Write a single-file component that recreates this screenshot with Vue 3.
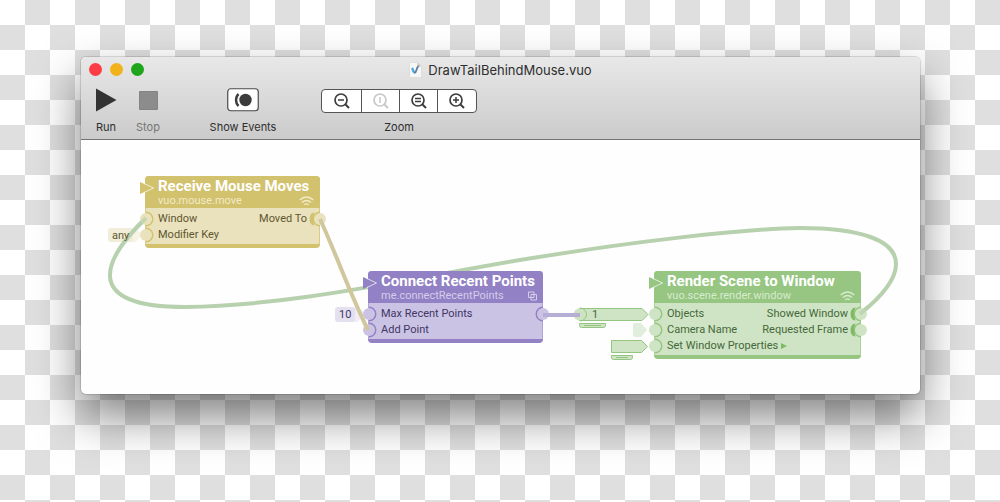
<script setup>
const zooms = [
  { id: 'out', label: 'Zoom out', d: 'M6 8h6' },
  { id: 'actual', label: 'Actual size', d: 'M9 5v6', off: true },
  { id: 'fit', label: 'Zoom to fit', d: 'M6 6.5h6M6 9.5h6' },
  { id: 'in', label: 'Zoom in', d: 'M6 8h6M9 5v6' }
]

const nodes = [
  {
    id: 'mouse', title: 'Receive Mouse Moves', kind: 'vuo.mouse.move', icon: 'wifi',
    rows: [
      { left: 'Window', right: 'Moved To', event: true },
      { left: 'Modifier Key' }
    ]
  },
  {
    id: 'connect', title: 'Connect Recent Points', kind: 'me.connectRecentPoints', icon: 'copy',
    rows: [
      { left: 'Max Recent Points', right: ' ' },
      { left: 'Add Point' }
    ]
  },
  {
    id: 'render', title: 'Render Scene to Window', kind: 'vuo.scene.render.window', icon: 'wifi',
    rows: [
      { left: 'Objects', right: 'Showed Window', event: true },
      { left: 'Camera Name', right: 'Requested Frame', event: true },
      { left: 'Set Window Properties', more: true }
    ]
  }
]
</script>

<template>
  <div class="desktop">
    <main class="window">
      <header class="chrome">
        <div class="titlebar">
          <div class="lights">
            <button class="light close" aria-label="Close"></button>
            <button class="light minimize" aria-label="Minimize"></button>
            <button class="light full" aria-label="Full screen"></button>
          </div>
          <h1 class="title">
            <svg width="13" height="16" viewBox="0 0 13 16" aria-hidden="true">
              <path d="M.5.5h8l4 4v11H.5z" fill="#f7f7f7" stroke="#dedede" />
              <path d="M8.500 .5v4h4z" fill="#c4c4c4" />
              <path d="M3 6c1 1 .8 4.500 3 4.500" stroke="#4aa3dc" stroke-width="2.400" fill="none" />
              <path d="M5.500 10.800C8 10.500 7 6 9.500 4" stroke="#5f7d96" stroke-width="1.800" fill="none" />
            </svg>
            DrawTailBehindMouse.vuo
          </h1>
        </div>
        <div class="toolbar">
          <button class="tool">
            <svg class="glyph" width="22" height="24" viewBox="0 0 22 24" aria-hidden="true"><path d="M1 .5L21.500 12 1 23.500z" fill="#333" /></svg>
            Run
          </button>
          <button class="tool stop" disabled>
            <svg class="glyph" width="22" height="24" viewBox="0 0 22 24" aria-hidden="true"><path d="M2.500 3.500h18v18h-18z" fill="#8c8c8c" stroke="#848484" /></svg>
            Stop
          </button>
          <button class="tool events">
            <svg class="glyph" width="32" height="24" viewBox="0 0 32 24" aria-hidden="true">
              <rect x=".75" y=".75" width="30.500" height="22" rx="3" fill="#fff" stroke="#4a4a4a" stroke-width="1.200" />
              <circle cx="18.500" cy="12" r="6.200" fill="#3c3c3c" />
              <path d="M11.500 6C8.200 9 8.200 15 11.500 18" fill="none" stroke="#3c3c3c" stroke-width="2.500" />
            </svg>
            Show Events
          </button>
          <div class="zoom" role="group" aria-labelledby="zoom-label">
            <div class="segments">
              <button v-for="z in zooms" :key="z.id" class="segment" :aria-label="z.label" :disabled="z.off">
                <svg width="18" height="18" viewBox="0 0 18 18" fill="none" stroke="currentColor" aria-hidden="true">
                  <circle cx="8" cy="8" r="6" stroke-width="1.700" />
                  <path d="M12 12l4 4" stroke-width="2" />
                  <path :d="z.d" transform="translate(-1 0)" stroke-width="1.500" />
                </svg>
              </button>
            </div>
            <span id="zoom-label">Zoom</span>
          </div>
        </div>
      </header>

      <section class="canvas" aria-label="Composition">
        <svg class="layer" viewBox="81 140 839 254" width="839" height="254">
          <path d="M130 228h5l8 7-8 7h-5z" fill="#f7f4e6" />
          <rect x="108" y="228" width="25" height="14" rx="3" fill="#f1edd9" />
          <path d="M352 307h5l9 7-9 8h-5z" fill="#f0edf7" />
          <rect x="335" y="307" width="20" height="15" rx="3" fill="#e4e0f0" />
          <path d="M146 218C120 243 109 262 110 277C112 300 145 307 185 307C300 305 400 280 520 260C630 242 740 229 800 228C860 228 896 240 896 264C896 280 880 298 860 314" class="cable green" />
          <text x="112" y="239" class="value olive">any</text>
          <text x="339" y="318" class="value violet">10</text>
          <g class="drawer">
            <path d="M579 308.500h63l6 6-6 6h-63z" />
            <path d="M579.500 323.500h26v2q0 2-2 2h-22q-2 0-2-2z" />
            <path d="M584 325.500h17" />
            <path d="M611.500 340.500h30l6 6-6 6h-30z" />
            <path d="M611.500 355.500h21v2q0 2-2 2h-17q-2 0-2-2z" />
            <path d="M616 357.500h12" />
          </g>
          <path d="M635 323h6l6 7-6 7h-6q-2 0-2-2v-10q0-2 2-2z" fill="#e2eedd" />
          <circle cx="579.500" cy="314.500" r="6" fill="#cde3c1" />
          <path d="M580 308a6.500 6.500 0 0 1 0 13" class="ring" />
          <text x="592" y="318" class="value leaf">1</text>
        </svg>

        <article v-for="n in nodes" :key="n.id" class="node" :class="n.id">
          <svg class="trigger" width="16" height="14" viewBox="0 0 16 14" aria-hidden="true">
            <path class="flag" d="M1 1L14 7 1 13z" />
            <path d="M5 2.500L14.500 7 5 11.500" fill="none" stroke="#fff" stroke-opacity=".7" />
          </svg>
          <header class="head">
            <h2>{{ n.title }}</h2>
            <p>
              {{ n.kind }}
              <svg v-if="n.icon === 'wifi'" width="15" height="10" viewBox="0 0 15 10" fill="none" stroke="currentColor" stroke-width="1.400" aria-hidden="true">
                <path d="M.7 4Q7.500-2 14.300 4M3 6.500Q7.500 2.500 12 6.500M5.300 8.800Q7.500 7 9.700 8.800" />
              </svg>
              <svg v-else width="9" height="10" viewBox="0 0 9 10" fill="none" stroke="currentColor" aria-hidden="true">
                <path d="M.5 1h5.500v5.500H.5zM3 3.500h5.500V9H3z" />
              </svg>
            </p>
          </header>
          <div class="body">
            <div v-for="r in n.rows" :key="r.left" class="row">
              <svg class="port in" width="18" height="16" viewBox="0 0 18 16" aria-hidden="true">
                <path d="M9 1.500a6.500 6.500 0 0 1 0 13" />
                <circle cx="9" cy="8" r="6" />
              </svg>
              <span>{{ r.left }}
                <svg v-if="r.more" class="more" width="6" height="6" viewBox="0 0 6 6" aria-hidden="true"><path d="M0 0l6 3-6 3z" /></svg>
              </span>
              <span v-if="r.right" class="out-label">{{ r.right }}</span>
              <svg v-if="r.right" class="port out" width="22" height="16" viewBox="0 0 22 16" aria-hidden="true">
                <path d="M13 1.500a6.500 6.500 0 0 0 0 13" />
                <circle cx="13" cy="8" r="6" />
                <path v-if="r.event" class="event" d="M7.500 1.500C1 1.500 1 14.500 7.500 14.500C5.500 10.500 5.500 5.500 7.500 1.500z" />
              </svg>
            </div>
          </div>
        </article>

        <svg class="layer" viewBox="81 140 839 254" width="839" height="254" aria-hidden="true">
          <path d="M146 218L136 228M860 314L869 306" class="cable green tip" />
          <path d="M320 219C337 256 350 294 368 330" class="cable yellow" />
          <path d="M543 315H580" class="cable purple" />
        </svg>
      </section>
    </main>
  </div>
</template>

<style>
body {
  margin: 0;
}
</style>

<style scoped>
.desktop {
  box-sizing: border-box;
  min-height: 100vh;
  padding: 57px 80px 80px 81px;
  background: repeating-conic-gradient(#dfdfdf 0 25%, #fff 0 50%) 0 0 / 50px 50px;
  font-family: Inter, Roboto, sans-serif;
  color: #2e2e2e;
}
.window {
  border-radius: 5px;
  background: #fefefe;
  box-shadow: 0 0 0 1px rgba(0, 0, 0, 0.12), 0 22px 46px rgba(0, 0, 0, 0.5);
}
.chrome {
  border-bottom: 1px solid #737373;
  border-radius: 5px 5px 0 0;
  background: linear-gradient(#e8e8e8, #cbcbcb);
}
.titlebar {
  display: grid;
  grid-template-columns: 1fr auto 1fr;
  align-items: center;
  height: 25px;
}
.lights {
  display: flex;
  gap: 8px;
  padding-left: 8px;
}
.light {
  width: 13px;
  height: 13px;
  padding: 0;
  border: 0;
  border-radius: 50%;
}
.close { background: #fc3d46; }
.minimize { background: #f2b21b; }
.full { background: #1ea51b; }
.title {
  display: flex;
  align-items: center;
  gap: 6px;
  margin: 0;
  font-size: 13px;
  font-weight: 400;
  line-height: 16px;
}
.toolbar {
  display: flex;
  height: 57px;
  padding: 6px 4px 0;
  box-sizing: border-box;
  font-size: 11px;
  line-height: 14px;
}
.tool,
.zoom {
  display: flex;
  flex-direction: column;
  align-items: center;
  gap: 8px;
}
.tool {
  width: 42px;
  padding: 0;
  border: 0;
  background: none;
  font: inherit;
  color: inherit;
  white-space: nowrap;
}
.stop { color: #757575; }
.events {
  width: 74px;
  margin-left: 37px;
}
.zoom {
  gap: 7px;
  margin-left: 41px;
}
.segments {
  display: flex;
  height: 22px;
  margin-top: 1px;
  border: 1px solid #555;
  border-radius: 4px;
  background: #fff;
}
.segment {
  display: grid;
  place-items: center;
  width: 39px;
  padding: 0;
  border: 0;
  background: none;
  color: #3d3d3d;
}
.segment + .segment {
  width: 38px;
  border-left: 1px solid #555;
}
.segment:last-child { width: 39px; }
.segment:disabled { color: #c8c8c8; }

.canvas {
  position: relative;
  min-height: 254px;
  overflow: hidden;
  border-radius: 0 0 5px 5px;
  font-family: Roboto, "Open Sans", sans-serif;
}
.layer {
  position: absolute;
  top: 0;
  left: 0;
  pointer-events: none;
}
.cable {
  fill: none;
  stroke-width: 4;
}
.green { stroke: #b7d0ad; }
.tip { stroke-opacity: 0.7; }
.yellow { stroke: #d0c79c; }
.purple { stroke: #b7aed6; }
.value { font-size: 11px; }
.olive { fill: #5f5630; }
.violet { fill: #3f3666; }
.leaf { fill: #45683a; }
.drawer {
  fill: #cfe4c4;
  stroke: #94c681;
}
.ring {
  fill: none;
  stroke: #94c681;
}

.node {
  position: absolute;
  box-sizing: border-box;
  border-bottom: 4px solid var(--dark);
  border-radius: 4px;
  background: var(--light);
  box-shadow: inset 1px 0 var(--edge), inset -1px 0 var(--edge);
  color: var(--ink);
}
.mouse {
  --dark: #d2c16d;
  --light: #e9e2bd;
  --edge: #d8cb83;
  --ink: #5f5630;
  --pale: #f1ebc9;
  top: 36px;
  left: 64px;
  width: 175px;
}
.connect {
  --dark: #9281c5;
  --light: #cbc3e4;
  --edge: #b0a3d6;
  --ink: #3f3666;
  --pale: #d5cdea;
  top: 131px;
  left: 287px;
  width: 175px;
}
.render {
  --dark: #96c681;
  --light: #cfe4c4;
  --edge: #aad397;
  --ink: #45683a;
  --pale: #d8ebcf;
  top: 131px;
  left: 573px;
  width: 207px;
}
.trigger {
  position: absolute;
  top: 5px;
  left: -6px;
}
.flag { fill: var(--dark); }
.head {
  height: 32px;
  padding: 0 6px 0 13px;
  box-sizing: border-box;
  border-radius: 4px 4px 0 0;
  background: var(--dark);
  color: #fff;
}
.head h2 {
  margin: 0;
  font-size: 15px;
  font-weight: 700;
  line-height: 20px;
  white-space: nowrap;
}
.head p {
  display: flex;
  align-items: center;
  justify-content: space-between;
  margin: 0;
  font-size: 11px;
  line-height: 10px;
  color: var(--pale);
}
.body { padding: 3px 0 1px; }
.row {
  position: relative;
  display: flex;
  justify-content: space-between;
  height: 16px;
  padding: 0 13px;
  font-size: 11px;
  line-height: 15px;
  white-space: nowrap;
}
.port {
  position: absolute;
  top: 0;
  fill: none;
  stroke: var(--dark);
  stroke-width: 2;
}
.port circle {
  fill: var(--light);
  stroke: none;
}
.in { left: -8px; }
.out { right: -9px; }
.port .event {
  fill: var(--dark);
  stroke: none;
}
.render .event { fill: #7dbb63; }
.more { fill: #7dbb63; }
</style>
